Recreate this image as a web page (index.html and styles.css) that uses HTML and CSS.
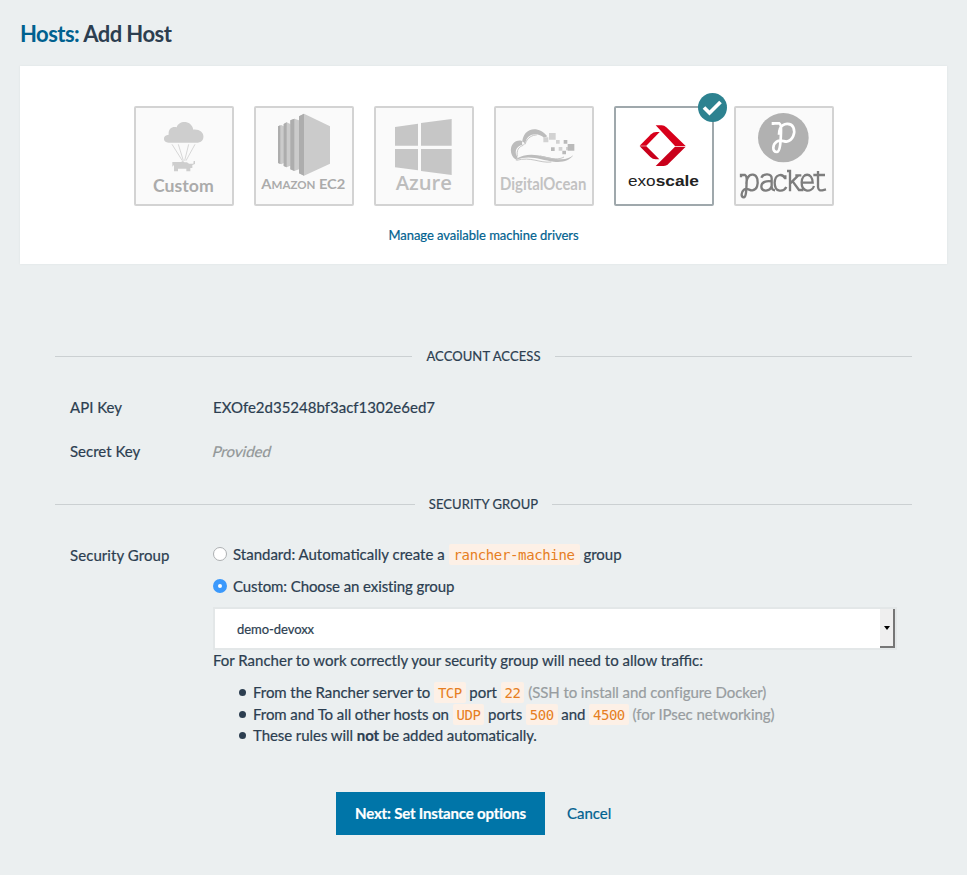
FILE: index.html
```html
<!DOCTYPE html>
<html lang="en">
<head>
<meta charset="utf-8">
<title>Add Host</title>
<link rel="stylesheet" href="styles.css">
</head>
<body>
<header class="title"><h1><a class="crumb">Hosts:</a> Add Host</h1></header>
<section class="panel">
  <div class="drivers">
    <div class="driver"><svg viewBox="12 48 300 300">
      <path fill="#cecece" d="M116 158C97 157 97 135 116 134C114 112 131 108 140 112C145 91 184 88 190 119C228 116 228 157 204 158Z"/>
      <path fill="none" stroke="#c4c4c4" stroke-width="2" d="M126 163L157 212M145 163L160 212M176 163L164 212M195 163L168 212"/>
      <path fill="#cecece" d="M127 216H153L159 213L163 217H171L177 221H190L191 213H195V222L187 225V234H181V244H169V236H144V244H132V225L127 230Z"/>
      <text x="69" y="305" textLength="182" lengthAdjust="spacingAndGlyphs" class="t-custom">Custom</text></svg></div>
    <div class="driver"><svg viewBox="12 48 300 300">
      <path fill="#cbcbcb" d="M84 109L94 105L101 109V219L94 223L84 219ZM101 102L110 97L121 102V227L110 232L101 228ZM121 91L133 86L147 91V238L133 243L121 238ZM147 79L162 71L240 109V221L162 257L147 250Z"/>
      <path fill="#adadad" d="M84 109L91 106V222L84 219ZM101 102L110 97V232L101 228ZM121 91L133 86V243L121 238ZM147 79L162 71V257L147 250Z"/>
      <text x="34" y="298" textLength="252" lengthAdjust="spacingAndGlyphs" class="t-amazon">A<tspan class="sc">MAZON</tspan> EC2</text></svg></div>
    <div class="driver"><svg viewBox="12 48 300 300">
      <path fill="#c6c6c6" d="M75 111L144 101V167H75ZM153 99L245 87V167H153ZM75 177H144V241L75 232ZM153 177H245V255L153 243Z"/>
      <text x="77" y="299" textLength="169" lengthAdjust="spacingAndGlyphs" class="t-azure">Azure</text></svg></div>
    <div class="driver"><svg viewBox="12 48 300 300">
      <path fill="#bcbcbc" d="M96 164C96 111 145 104 172 139L162 143C144 126 110 129 106 160ZM94 152C60 148 53 192 76 208C115 183 157 199 195 206C223 211 239 205 250 195C239 212 218 218 191 215C153 211 119 192 76 211L83 202C70 185 80 166 104 163L103 158Z"/>
      <path fill="none" stroke="#c6c6c6" stroke-width="3" d="M105 163C112 141 128 135 140 135M82 199C79 181 86 170 100 166M79 211C124 199 148 220 184 216M151 198C191 209 207 209 222 201"/>
      <path fill="#d2d2d2" d="M177 129H197V149H177ZM160 142H175V157H160ZM198 150H209V161H198ZM206 171H217V182H206ZM228 171H235V181H228Z"/>
      <path fill="#bababa" d="M221 150H232V161H221ZM233 162H253V182H233ZM183 172H194V183H183ZM217 182H228V193H217Z"/>
      <text x="30" y="299" textLength="259" lengthAdjust="spacingAndGlyphs" class="t-ocean">DigitalOcean</text></svg></div>
    <div class="driver selected"><svg viewBox="12 63 300 300">
      <path fill="#d8001b" d="M137 121H155Q163 121 169 127L227 183H195Z"/>
      <path fill="#c9001b" d="M227 185L174 238Q169 243 161 243H137L195 185Z"/>
      <path fill="#d8001b" d="M89 182L123 148Q130 141 139 141H149L109 182Z"/>
      <path fill="#c9001b" d="M89 184H109L148 223H137Q128 223 121 216Z"/>
      <text x="54" y="304" textLength="83" lengthAdjust="spacingAndGlyphs" class="t-exo">exo</text><text x="137" y="304" textLength="130" lengthAdjust="spacingAndGlyphs" class="t-exo strong">scale</text></svg>
      <span class="badge"><svg viewBox="0 0 29 29"><path d="M6 14.5L11.5 20L22.5 9" fill="none" stroke="#fff" stroke-width="3.7"/></svg></span></div>
    <div class="driver"><svg viewBox="12 48 300 300">
      <ellipse cx="160" cy="143" rx="76" ry="74" fill="#b1b1b1"/>
      <path fill="none" stroke="#fff" stroke-width="8" d="M129 105V100H148Q154 103 153 127C152 157 150 185 141 186C125 185 128 163 140 155C151 148 159 154 169 155C189 151 197 129 190 112C183 98 160 97 150 116C148 121 147 128 147 134"/>
      <g fill="none" stroke="#7d7d7d" stroke-width="7">
        <path d="M33 262V255H45Q51 258 50 274C49 297 49 321 42 322C31 321 34 306 42 299C52 292 58 302 67 301C82 299 85 282 82 267C78 251 61 250 54 262Q49 269 49 281"/>
        <path d="M94 263C100 249 125 250 125 265V291Q126 301 135 301M124 274C110 272 94 275 94 290C95 307 120 304 124 290"/>
        <path d="M166 268V256M165 265C157 249 135 252 134 278C134 309 161 306 169 291"/>
        <path d="M171 243H180V304M196 256H214M205 256L180 281M188 274L207 300H220"/>
        <path d="M216 278H248C247 246 216 247 215 277C214 309 246 307 252 288"/>
        <path d="M250 255H285M264 243V291Q265 303 277 301L288 298"/>
      </g></svg></div>
  </div>
  <a class="manage">Manage available machine drivers</a>
</section>
<main class="form">
  <h2 class="divider"><span>ACCOUNT ACCESS</span></h2>
  <div class="row key"><label>API Key</label><div>EXOfe2d35248bf3acf1302e6ed7</div></div>
  <div class="row secret"><label>Secret Key</label><div class="provided">Provided</div></div>
  <h2 class="divider second"><span>SECURITY GROUP</span></h2>
  <div class="row group">
    <label>Security Group</label>
    <div class="options">
      <div class="option"><i class="radio"></i><span>Standard: Automatically create a <code>rancher-machine</code> group</span></div>
      <div class="option tight"><i class="radio on"></i><span>Custom: Choose an existing group</span></div>
      <div class="select"><span>demo-devoxx</span><i class="arrow"></i></div>
      <p>For Rancher to work correctly your security group will need to allow traffic:</p>
      <ul>
        <li>From the Rancher server to <code>TCP</code> port <code>22</code> <span class="muted">(SSH to install and configure Docker)</span></li>
        <li>From and To all other hosts on <code>UDP</code> ports <code>500</code> and <code>4500</code> <span class="muted">(for IPsec networking)</span></li>
        <li>These rules will <b>not</b> be added automatically.</li>
      </ul>
    </div>
  </div>
</main>
<footer class="actions"><button class="next">Next: Set Instance options</button><a class="cancel">Cancel</a></footer>
</body>
</html>
```
FILE: styles.css
```css
* { box-sizing: border-box; }
body { margin: 0; height: 875px; overflow: hidden; background: #ebeff0; color: #2c3e50; font: 15px/22px Lato, sans-serif; -webkit-text-stroke: 0.2px; }
h1, h2, p, ul { margin: 0; padding: 0; font-weight: 400; }
.title { height: 66px; padding: 20px 20px 0; }
h1 { font-size: 22px; line-height: 27px; font-weight: 700; letter-spacing: -0.55px; -webkit-text-stroke: 0; }
.crumb { color: #00618f; }
.panel { height: 198px; margin: 0 20px; padding-top: 40px; background: #fff; box-shadow: 0 0 2px #dde2e3; text-align: center; }
.drivers { display: flex; justify-content: center; gap: 20px; }
.driver { position: relative; width: 100px; height: 100px; background: #fafafa; box-shadow: inset 0 0 0 2px #d3d3d3; border-radius: 2px; }
.driver svg { display: block; width: 100%; height: 100%; }
.selected { background: #fff; box-shadow: inset 0 0 0 2px #9fa8ac; }
.badge { position: absolute; top: -13px; right: -13px; width: 29px; height: 29px; border-radius: 50%; background: #2d8290; }
.t-custom { font: 700 50px Lato; fill: #ababab; }
.t-amazon { font: 700 42px Lato; fill: #ababab; }
.sc { font-size: 33px; }
.t-azure { font: 600 61px "Open Sans"; fill: #bdbdbd; }
.t-ocean { font: 700 49px Lato; fill: #c2c2c2; }
.t-exo { font: 400 44px "Liberation Sans"; fill: #222; }
.strong { font-weight: 700; }
.manage { display: block; margin-top: 19px; font-size: 13px; line-height: 20px; letter-spacing: -0.04px; color: #00618f; }
.form { margin: 81px 55px 0; }
.divider { display: flex; align-items: center; gap: 14px; font-size: 13px; line-height: 22px; letter-spacing: 0.08px; }
.divider::before, .divider::after { content: ""; flex: 1; height: 1px; background: #cbd0d2; }
.row { display: grid; grid-template-columns: 143px 1fr; padding: 0 15px; }
.key { margin-top: 29px; }
.secret { margin-top: 22px; }
.provided { justify-self: start; color: #929798; transform: skewX(-14deg); }
.second { margin-top: 31px; }
.group { margin-top: 28px; grid-template-columns: 143px 683px; }
.group > label { margin-top: 1px; letter-spacing: 0.07px; }
.option { display: flex; height: 22px; margin-bottom: 10px; }
.tight { letter-spacing: -0.1px; }
.radio { flex: none; width: 14px; height: 14px; margin: 4px 6px 0 0; border: 1px solid #adb0b2; border-radius: 50%; background: #fff; }
.radio.on { border: 5px solid #3b99fc; }
code { display: inline-block; height: 21px; padding: 0 5px; border-radius: 2px; background: #fdf0e6; color: #e67e22; font: 14px/22px "DejaVu Sans Mono", monospace; letter-spacing: -0.36px; word-spacing: 0; -webkit-text-stroke: 0; vertical-align: top; margin-top: 1px; }
.select { display: flex; align-items: stretch; justify-content: space-between; width: 684px; height: 43px; border: 2px solid #e3e7e8; background: #fff; font-size: 13px; line-height: 41px; letter-spacing: -0.05px; padding-left: 22px; margin-bottom: -1px; }
.arrow { width: 15px; background: #efefef; border: solid #767676; border-width: 0 2px 2px 0; display: flex; align-items: center; justify-content: center; }
.arrow::before { content: ""; border: 3.5px solid transparent; border-top: 4px solid #000; border-bottom: 0; }
ul { list-style: none; margin-top: 10px; }
li { position: relative; height: 22px; padding-left: 40px; letter-spacing: -0.05px; word-spacing: -0.1px; }
li:last-child { margin-top: -1px; }
li code { padding: 0 4px; letter-spacing: -0.5px; }
li::before { content: ""; position: absolute; left: 26px; top: 8px; width: 7px; height: 7px; border-radius: 50%; background: #2c3e50; }
.muted { color: #989da0; }
.actions { display: flex; align-items: center; margin: 46px 0 0 336px; }
.next { width: 209px; height: 43px; padding: 0 0 2px; border: 0; background: #0075a8; color: #fff; font: 700 15px Lato; letter-spacing: -0.17px; }
.cancel { margin: -2px 0 0 22px; color: #00618f; }
```
